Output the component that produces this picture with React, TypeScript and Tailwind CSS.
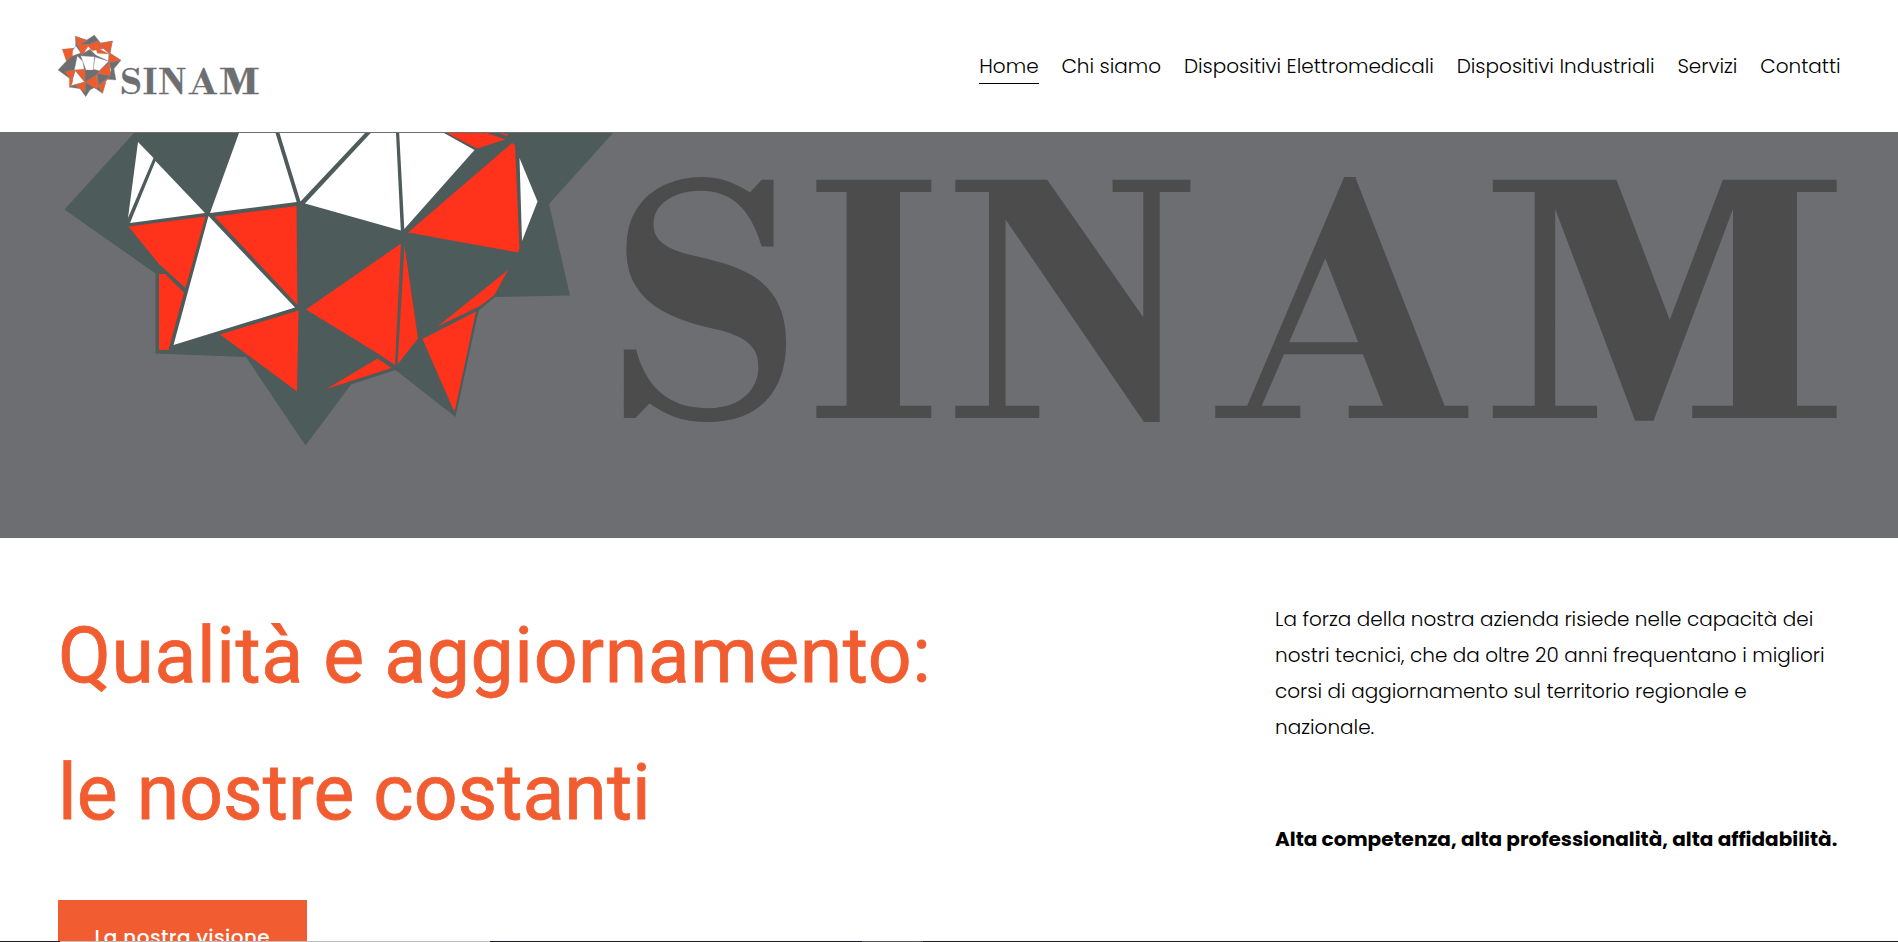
const NAV = [
  "Home",
  "Chi siamo",
  "Dispositivi Elettromedicali",
  "Dispositivi Industriali",
  "Servizi",
  "Contatti",
];

const STAR =
  "134,133 64.5,209.5 155.5,273.5 155.5,353.5 246,357 305.5,445.5 351,384.5 395.5,370 455.5,417 478.5,311 495,297 570,295.5 549,204 613,133";

const WHITE_FACES = [
  "138,142 153.5,158 128,218",
  "155.5,161 205,213 130,223",
  "239,133 275.5,133 296.7,202 210,213",
  "279.5,133 365,133 300.5,201.5",
  "370.7,133 396,133 400.8,230.5 305,203.5",
  "399.2,133 444,133 474.5,150 404.3,229",
  "519.5,158 537.5,201.5 522,241",
  "208.5,216 295,307.5 173.5,345",
];

const RED_FACES = [
  "128.5,226.5 205.5,216.5 185.5,288 158.5,263.5",
  "214.5,216.5 296.5,206 297.5,305",
  "159,274 165,274 184,292.5 168.5,350 159,350",
  "220,334.5 298.5,310.5 297,391.5 246.5,354",
  "306,309.5 401,243.5 395,365 377,353",
  "404.5,246 418,338.5 397.5,364.5",
  "326.5,389 377.5,358.5 391.5,368",
  "422.5,339 476,311.5 455,410 453.5,410",
  "437.5,326.5 508,270 494.5,295 480,306",
  "408,232.5 512,143 515,145 519.5,248 518,252.5",
  "447,133 487,133 505.5,139.5 477,148.5",
  "499,133 508,134 507,136",
];

const Faces = ({ points, className }: { points: string[]; className: string }) => (
  <g className={className}>
    {points.map((p) => (
      <polygon key={p} points={p} />
    ))}
  </g>
);

const Wordmark = ({ className }: { className: string }) => (
  <text
    y="416.5"
    fontSize="312"
    strokeWidth="3"
    className={`font-['Libre_Bodoni','Liberation_Serif',serif] font-bold ${className}`}
  >
    <tspan x="614.4" textLength="178" lengthAdjust="spacingAndGlyphs">S</tspan>
    <tspan x="811.5" textLength="123" lengthAdjust="spacingAndGlyphs">I</tspan>
    <tspan x="950.6" textLength="243" lengthAdjust="spacingAndGlyphs">N</tspan>
    <tspan x="1221.9" textLength="239.8" lengthAdjust="spacingAndGlyphs">A</tspan>
    <tspan x="1487" textLength="353.5" lengthAdjust="spacingAndGlyphs">M</tspan>
  </text>
);

const Logo = () => (
  <svg viewBox="54 42 606 195" className="h-[65px] w-[202px] overflow-visible" aria-label="SINAM">
    <g stroke="#9a8f8c" strokeWidth="1" strokeLinejoin="round">
      <polygon
        fill="#6d6e71"
        points="54,150 80,122 68,88 97,86 107,82 106,49 140,60 163,45 182,69 217,63 211,100 243,121 222,146 228,180 198,178 187,220 163,203 150,210 137,230 120,206 90,202 92,178"
      />
      <Faces
        className="fill-white"
        points={[
          "108,78 122,99 96,108 94,96",
          "112,108 128,124 133,150 103,150",
          "122,107 163,110 160,150 138,150",
          "165,111 206,124 178,152 160,148",
          "142,77 180,78 207,100 205,123 168,106 150,88 132,98",
          "206,128 213,150 207,163",
          "106,152 134,186 92,197",
        ]}
      />
      <Faces
        className="fill-[#f15a29]"
        points={[
          "106,49 142,62 111,76",
          "67,88 99,85 97,107 79,123",
          "112,72 148,74 126,106",
          "142,76 174,62 190,86 156,92",
          "180,70 218,63 207,102",
          "166,80 207,102 172,100",
          "207,98 243,121 207,128",
          "75,155 105,149 96,182",
          "105,150 135,147 135,187",
          "88,174 99,182 92,202 88,202",
          "104,195 136,185 136,216",
          "136,186 172,163 169,207",
          "170,164 178,197 169,207",
          "174,197 198,185 188,220",
          "180,192 209,169 199,183",
          "171,160 209,127 211,167",
        ]}
      />
      <polygon fill="#6d6e71" points="150,89 164,108 128,108" />
    </g>
    <g transform="translate(34 82.7) scale(0.3386 0.331)">
      <Wordmark className="fill-[#6d6e71] stroke-[#6d6e71]" />
    </g>
  </svg>
);

export default function App() {
  return (
    <div className="flex h-[942px] w-full flex-col overflow-hidden bg-white font-[Poppins,sans-serif] text-xl text-black">
      <header className="flex h-[132px] shrink-0 items-center justify-between pr-[57.4px] pl-[58px]">
        <Logo />
        <nav className="flex gap-[22.8px] font-light">
          {NAV.map((label, i) => (
            <a
              key={label}
              href="#"
              className={`border-b pt-[2px] pb-px leading-8 whitespace-nowrap ${i === 0 ? "border-black" : "border-transparent"}`}
            >
              {label}
            </a>
          ))}
        </nav>
      </header>

      <div className="h-[406px] shrink-0 border-t border-[#6d6e72] bg-[#6d6e72]">
        <svg viewBox="0 133 1898 405" className="block h-[405px] w-[1898px] overflow-visible" aria-label="SINAM">
          <polygon points={STAR} fill="#4d5b5a" />
          <Faces points={WHITE_FACES} className="fill-white" />
          <Faces points={RED_FACES} className="fill-[#ff321b]" />
          <Wordmark className="fill-[#4c4c4c] stroke-[#4c4c4c]" />
        </svg>
      </div>

      <main className="flex h-[403px] shrink-0 justify-between overflow-hidden pr-[58px] pl-[58px]">
        <div className="flex flex-col items-start pt-[50px]">
          <h1 className="font-[Roboto,sans-serif] text-[77px] leading-[137px] font-normal whitespace-nowrap text-[#f15d30] [-webkit-text-stroke:0.8px_#f15d30]">
            <span className="block tracking-[0.55px]">Qualità e aggiornamento:</span>
            <span className="block">le nostre costanti</span>
          </h1>
          <a
            href="#"
            className="mt-[38px] bg-[#f15d30] px-[36.5px] py-[23px] leading-7 font-medium tracking-[0.4px] whitespace-nowrap text-white"
          >
            La nostra visione
          </a>
        </div>
        <div className="w-[565px] pt-[63px] leading-9">
          <p className="font-light">
            La forza della nostra azienda risiede nelle capacità dei nostri tecnici, che da oltre 20 anni
            frequentano i migliori corsi di aggiornamento sul territorio regionale e nazionale.
          </p>
          <p className="mt-[76px] font-bold whitespace-nowrap">
            Alta competenza, alta professionalità, alta affidabilità.
          </p>
        </div>
      </main>

      <footer className="flex h-px shrink-0 bg-[#1f1a24]">
        <div className="ml-[60px] h-px w-[430px] bg-[#bdbdbd]" />
        <div className="ml-[372px] h-px w-[61px] bg-[#555358]" />
      </footer>
    </div>
  );
}
